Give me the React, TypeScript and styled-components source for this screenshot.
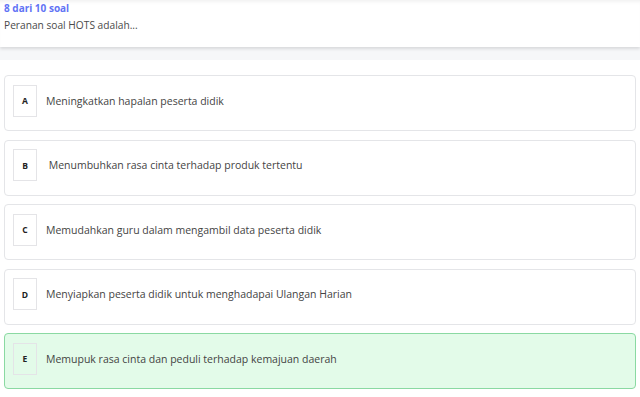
import React from 'react';
import styled, { createGlobalStyle } from 'styled-components';

const GlobalStyle = createGlobalStyle`
  html, body {
    margin: 0;
    padding: 0;
    background: #ffffff;
    font-family: "Open Sans", "Noto Sans", sans-serif;
  }
`;

const options = [
    { key: 'A', text: 'Meningkatkan hapalan peserta didik' },
    { key: 'B', text: '\u00a0Menumbuhkan rasa cinta terhadap produk tertentu' },
    { key: 'C', text: 'Memudahkan guru dalam mengambil data peserta didik' },
    { key: 'D', text: 'Menyiapkan peserta didik untuk menghadapai Ulangan Harian' },
    { key: 'E', text: 'Memupuk rasa cinta dan peduli terhadap kemajuan daerah', selected: true },
];

const App = () => {
    return (
        <Page>
            <GlobalStyle />
            <Header>
                <Counter>8 dari 10 soal</Counter>
                <Question>Peranan soal HOTS adalah...</Question>
            </Header>
            <Band />
            <OptionList>
                {options.map((o) => (
                    <Option key={o.key} $selected={!!o.selected}>
                        <Letter>{o.key}</Letter>
                        <OptionText>{o.text}</OptionText>
                    </Option>
                ))}
            </OptionList>
        </Page>
    );
};

const Page = styled.div`
  width: 640px;
  height: 397px;
  overflow: hidden;
  background: #ffffff;
`;

const Header = styled.div`
  height: 47px;
  padding: 1px 4px 0;
  box-sizing: border-box;
  background: #ffffff;
  box-shadow: inset 0 4px 4px -3px rgba(0, 0, 0, 0.08), 0 2px 3px rgba(0, 0, 0, 0.12);
  position: relative;
  z-index: 1;
`;

const Counter = styled.div`
  color: #6173f5;
  font-weight: 700;
  font-size: 10px;
  line-height: 15px;
`;

const Question = styled.div`
  color: #4a4a4a;
  font-size: 10.2px;
  line-height: 14px;
  margin-top: 2px;
`;

const Band = styled.div`
  height: 13px;
  background: #f6f7f9;
`;

const OptionList = styled.div`
  display: flex;
  flex-direction: column;
  gap: 8.6px;
  padding: 15px 4px 0;
`;

const Option = styled.div<{ $selected: boolean }>`
  display: flex;
  align-items: center;
  gap: 9px;
  height: 56px;
  box-sizing: border-box;
  padding: 0 8px 5px;
  border-radius: 4px;
  border: 1px solid ${(p) => (p.$selected ? '#8ad9a2' : '#e4e5e8')};
  background: ${(p) => (p.$selected ? '#e3fbe9' : '#ffffff')};
`;

const Letter = styled.div`
  width: 24px;
  height: 32px;
  box-sizing: border-box;
  border: 1px solid #e4e4e7;
  display: flex;
  align-items: center;
  justify-content: center;
  font-size: 8.5px;
  font-weight: 700;
  color: #222;
  flex: none;
`;

const OptionText = styled.div`
  font-size: 10.5px;
  color: #444;
`;

export default App;
